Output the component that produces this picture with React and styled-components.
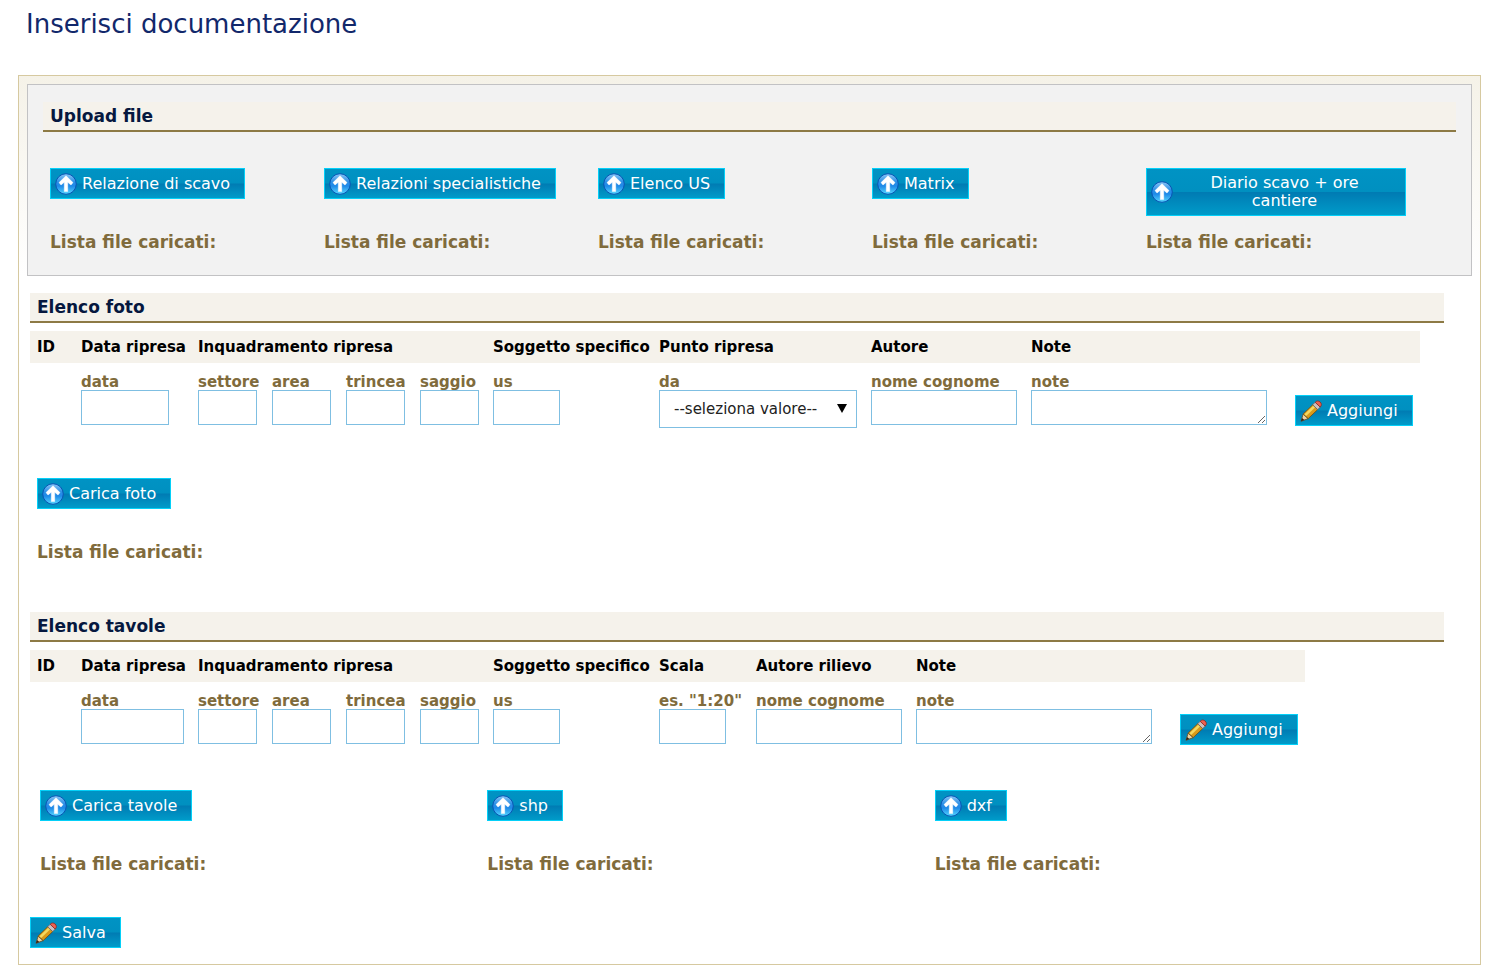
import styled, { createGlobalStyle } from "styled-components";

const GlobalStyle = createGlobalStyle`
  * {
    box-sizing: border-box;
  }
  body {
    margin: 0;
    background: #fff;
    font-family: "DejaVu Sans", Verdana, sans-serif;
  }
`;

const uploads = [
  "Relazione di scavo",
  "Relazioni specialistiche",
  "Elenco US",
  "Matrix",
  "Diario scavo + ore cantiere",
];

const drawings = ["Carica tavole", "shp", "dxf"];

const photoColumns = [
  { title: "ID", width: 44, fields: [] },
  { title: "Data ripresa", width: 117, fields: [{ label: "data", width: 88 }] },
  {
    title: "Inquadramento ripresa",
    width: 295,
    fields: [
      { label: "settore", width: 59 },
      { label: "area", width: 59 },
      { label: "trincea", width: 59 },
      { label: "saggio", width: 59 },
    ],
  },
  { title: "Soggetto specifico", width: 166, fields: [{ label: "us", width: 67 }] },
  {
    title: "Punto ripresa",
    width: 212,
    fields: [{ label: "da", width: 198, type: "select" }],
  },
  { title: "Autore", width: 160, fields: [{ label: "nome cognome", width: 146 }] },
  { title: "Note", width: 264, fields: [{ label: "note", width: 236, type: "textarea" }] },
];

const tableColumns = [
  { title: "ID", width: 44, fields: [] },
  { title: "Data ripresa", width: 117, fields: [{ label: "data", width: 103 }] },
  photoColumns[2],
  photoColumns[3],
  { title: "Scala", width: 97, fields: [{ label: 'es. "1:20"', width: 67 }] },
  { title: "Autore rilievo", width: 160, fields: [{ label: "nome cognome", width: 146 }] },
  { title: "Note", width: 264, fields: [{ label: "note", width: 236, type: "textarea" }] },
];

function UploadIcon() {
  return (
    <Icon viewBox="0 0 22 22" aria-hidden="true">
      <defs>
        <linearGradient id="ball" x1="0" y1="0" x2="0" y2="1">
          <stop offset="0" stopColor="#8cc6f5" />
          <stop offset="0.4" stopColor="#2b8fe6" />
          <stop offset="0.6" stopColor="#1f8ae8" />
          <stop offset="1" stopColor="#55d8ff" />
        </linearGradient>
      </defs>
      <circle cx="11" cy="11" r="10.3" fill="url(#ball)" stroke="#0a55b4" strokeWidth="1" />
      <path
        d="M11 2.800 18 9.600 16 12l-3.300-2.800V18.600H9.300V9.200L6 12 4 9.600z"
        fill="#fff"
        stroke="#fff"
        strokeWidth="0.5"
        strokeLinejoin="round"
      />
    </Icon>
  );
}

function PencilIcon() {
  return (
    <Icon viewBox="0 0 22 22" aria-hidden="true">
      <path d="M1 21.300 3.200 14 8.200 18.600z" fill="#ecd2a4" stroke="#6b4a1c" strokeWidth="0.8" />
      <path d="M1 21.300l1-3.300 2.400 2.100z" fill="#2c2118" />
      <path d="M3.200 14 12.700 4.800l5 4.800L8.200 18.600z" fill="#d99a1a" stroke="#6e4b12" strokeWidth="0.8" />
      <path d="M4.400 14.200 13.200 5.700l1.800 1.800L6.200 16z" fill="#f4d860" />
      <path d="M12.700 4.800l2.500-2.500 5 4.800L17.700 9.600z" fill="#cdbfc0" stroke="#74605c" strokeWidth="0.7" />
      <path
        d="M15.200 2.300c1.200-1.600 3.300-1.700 4.900-.3 1.600 1.400 1.700 3.500.1 5.100z"
        fill="#ee6050"
        stroke="#8c2a20"
        strokeWidth="0.8"
      />
    </Icon>
  );
}

function UploadItem({ label }) {
  return (
    <div>
      <UploadSlot>
        <Button type="button">
          <UploadIcon />
          <span>{label}</span>
        </Button>
      </UploadSlot>
      <ListTitle>Lista file caricati:</ListTitle>
    </div>
  );
}

function Field({ id, label, width, type }) {
  return (
    <FieldBox>
      <Label htmlFor={id}>{label}</Label>
      {type === "select" && (
        <SelectWrap $width={width}>
          <Select id={id} defaultValue="">
            <option value="">--seleziona valore--</option>
          </Select>
        </SelectWrap>
      )}
      {type === "textarea" && <TextArea id={id} $width={width} />}
      {!type && <Input id={id} type="text" $width={width} />}
    </FieldBox>
  );
}

function EntryTable({ name, columns }) {
  return (
    <Table>
      <colgroup>
        {columns.map((column) => (
          <Col key={column.title} $width={column.width} />
        ))}
        <Col $width={132} />
      </colgroup>
      <thead>
        <tr>
          {columns.map((column) => (
            <Th key={column.title} scope="col">
              {column.title}
            </Th>
          ))}
          <Th />
        </tr>
      </thead>
      <tbody>
        <tr>
          {columns.map((column) => (
            <Td key={column.title}>
              <Fields>
                {column.fields.map((field) => (
                  <Field key={field.label} id={`${name}-${field.label}`} {...field} />
                ))}
              </Fields>
            </Td>
          ))}
          <ActionTd>
            <Button type="button">
              <PencilIcon />
              <span>Aggiungi</span>
            </Button>
          </ActionTd>
        </tr>
      </tbody>
    </Table>
  );
}

export default function App() {
  return (
    <Page>
      <GlobalStyle />
      <Title>Inserisci documentazione</Title>
      <Panel>
        <UploadBox>
          <Heading>Upload file</Heading>
          <UploadGrid>
            {uploads.map((label) => (
              <UploadItem key={label} label={label} />
            ))}
          </UploadGrid>
        </UploadBox>

        <Section>
          <Heading>Elenco foto</Heading>
          <EntryTable name="foto" columns={photoColumns} />
          <PhotoUpload>
            <UploadItem label="Carica foto" />
          </PhotoUpload>
        </Section>

        <Section>
          <Heading>Elenco tavole</Heading>
          <EntryTable name="tavole" columns={tableColumns} />
          <DrawingGrid>
            {drawings.map((label) => (
              <UploadItem key={label} label={label} />
            ))}
          </DrawingGrid>
        </Section>

        <SaveRow>
          <Button type="submit">
            <PencilIcon />
            <span>Salva</span>
          </Button>
        </SaveRow>
      </Panel>
    </Page>
  );
}

const Page = styled.main`
  padding: 8px 11px 9px 18px;
`;

const Title = styled.h1`
  margin: 0 0 35px 8px;
  color: #12286b;
  font-size: 26px;
  font-weight: 400;
  line-height: 32px;
`;

const Panel = styled.form`
  padding: 8px;
  border: 1px solid #d6c9a0;
  background: linear-gradient(#f5f2e8, #fff 200px);
`;

const UploadBox = styled.section`
  padding: 17px 15px 23px;
  border: 1px solid #c2c2c4;
  background: #f2f2f2;
`;

const Heading = styled.h2`
  margin: 0;
  padding: 4px 7px;
  border-bottom: 2px solid #8d7a45;
  background: #f5f2eb;
  color: #06183f;
  font-size: 17px;
  font-weight: 700;
  line-height: 20px;
`;

const UploadGrid = styled.div`
  display: grid;
  grid-template-columns: repeat(5, 1fr);
  padding: 36px 36px 0 7px;
`;

const UploadSlot = styled.div`
  display: flex;
  align-items: flex-start;
  height: 64px;
`;

const ListTitle = styled.h3`
  margin: 0;
  color: #806b3c;
  font-size: 17px;
  font-weight: 700;
  line-height: 20px;
`;

const Button = styled.button`
  display: inline-flex;
  align-items: center;
  gap: 5px;
  min-height: 31px;
  max-width: 260px;
  padding: 5px 14px 5px 4px;
  border: 1px solid #04d0f8;
  background: linear-gradient(#0093c4, #0090c0 49%, #007bb3 51%, #009bc9) padding-box;
  color: #fff;
  font-family: inherit;
  font-size: 16px;
  line-height: 18px;
  vertical-align: top;
  cursor: pointer;

  span {
    flex: 1;
  }
`;

const Icon = styled.svg`
  flex: none;
  width: 22px;
  height: 22px;
  margin: -2px 0;
`;

const Section = styled.section`
  padding: 17px 28px 0 3px;
`;

const Table = styled.table`
  margin-top: 8px;
  border-collapse: collapse;
  table-layout: fixed;
  width: min-content;
`;

const Col = styled.col`
  width: ${({ $width }) => $width}px;
`;

const Th = styled.th`
  height: 32px;
  padding: 0 0 0 7px;
  background: #f5f2eb;
  color: #000;
  font-size: 15px;
  line-height: 18px;
  text-align: left;
  white-space: nowrap;
`;

const Td = styled.td`
  padding: 11px 0 0 7px;
  vertical-align: top;
`;

const ActionTd = styled(Td)`
  padding-top: 32px;
`;

const Fields = styled.div`
  display: flex;
  gap: 15px;
`;

const FieldBox = styled.div`
  display: flex;
  flex-direction: column;
`;

const Label = styled.label`
  width: 0;
  color: #806b3c;
  font-size: 15px;
  font-weight: 700;
  line-height: 16px;
  white-space: nowrap;
`;

const Input = styled.input`
  width: ${({ $width }) => $width}px;
  height: 35px;
  padding: 4px 8px;
  border: 1px solid #7fbfe2;
  background: #fff;
  font-family: inherit;
  font-size: 15px;
`;

const TextArea = styled.textarea`
  width: ${({ $width }) => $width}px;
  height: 35px;
  padding: 4px 8px;
  border: 1px solid #7fbfe2;
  background: #fff;
  font-family: inherit;
  font-size: 15px;
`;

const SelectWrap = styled.div`
  position: relative;
  width: ${({ $width }) => $width}px;

  &::after {
    content: "";
    position: absolute;
    top: 14px;
    right: 10px;
    border: solid transparent;
    border-width: 9px 5px 0;
    border-top-color: #000;
    pointer-events: none;
  }
`;

const Select = styled.select`
  width: 100%;
  height: 38px;
  padding: 0 24px 0 14px;
  border: 1px solid #7fbfe2;
  border-radius: 0;
  background: #fff;
  color: #222;
  font-family: inherit;
  font-size: 15px;
  appearance: none;
`;

const PhotoUpload = styled.div`
  padding: 50px 7px 33px;
`;

const DrawingGrid = styled.div`
  display: grid;
  grid-template-columns: repeat(3, 1fr);
  padding: 45px 62px 0 10px;
`;

const SaveRow = styled.div`
  padding: 43px 3px 8px;
`;
